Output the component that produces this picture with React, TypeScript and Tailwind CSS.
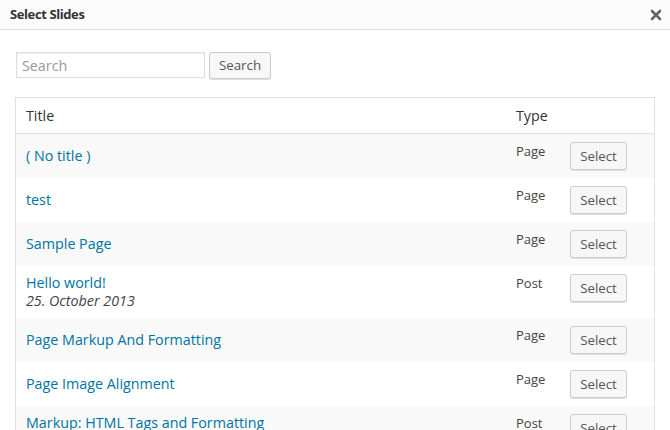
const rows = [
  { title: "( No title )", type: "Page" },
  { title: "test", type: "Page" },
  { title: "Sample Page", type: "Page" },
  { title: "Hello world!", date: "25. October 2013", type: "Post" },
  { title: "Page Markup And Formatting", type: "Page" },
  { title: "Page Image Alignment", type: "Page" },
  { title: "Markup: HTML Tags and Formatting", date: "11. January 2013", type: "Post" },
];

const SelectButton = () => (
  <button className="h-[28px] w-[57px] rounded-[3px] border border-[#cccccc] bg-[#f7f7f7] pt-[1px] text-[13.3px] text-[#555] shadow-[0_1px_0_#e0e0e0]">
    Select
  </button>
);

export default function App() {
  return (
    <div className="h-[430px] w-[670px] overflow-hidden bg-white font-['Open_Sans',sans-serif] text-[#444]">
      <div className="flex h-[30px] items-center justify-between border-b border-[#dddddd] bg-[#fcfcfc] pl-[10px] pr-[8px]">
        <h1 className="text-[13px] font-bold tracking-[-0.4px] text-[#333]">Select Slides</h1>
        <svg width="12" height="12" viewBox="0 0 12 12" className="text-[#666]">
          <path d="M2 2 L10 10 M10 2 L2 10" stroke="currentColor" strokeWidth="2.6" strokeLinecap="round" />
        </svg>
      </div>

      <div className="flex gap-[4px] pl-[16px] pt-[22px]">
        <input
          placeholder="Search"
          className="h-[26px] w-[189px] border border-[#dddddd] px-[5px] text-[14.3px] text-[#333] placeholder:text-[#999] shadow-[inset_0_1px_2px_rgba(0,0,0,0.07)] outline-none"
        />
        <button className="h-[27px] w-[62px] rounded-[3px] border border-[#cccccc] bg-[#f7f7f7] text-[13.3px] text-[#555] shadow-[0_1px_0_#e0e0e0]">
          Search
        </button>
      </div>

      <div className="ml-[15px] mt-[18px] w-[640px] border border-[#e1e1e1]">
        <div className="flex h-[36px] items-center border-b border-[#e1e1e1] text-[14.3px] text-[#333]">
          <div className="w-[490px] pl-[10px]">Title</div>
          <div className="pl-[10px]">Type</div>
        </div>
        {rows.map((r, i) => (
          <div key={i} className={`flex py-[8px] ${i % 2 === 0 ? "bg-[#f9f9f9]" : "bg-white"}`}>
            <div className="flex w-[490px] flex-col justify-center pl-[10px] text-[14.3px] leading-[18px] text-[#0074a2]">
              <span>{r.title}</span>
              {r.date && <span className="italic text-[#444]">{r.date}</span>}
            </div>
            <div className="w-[64px] pl-[10px] text-[13px] leading-[18px] text-[#444]">{r.type}</div>
            <SelectButton />
          </div>
        ))}
      </div>
    </div>
  );
}
